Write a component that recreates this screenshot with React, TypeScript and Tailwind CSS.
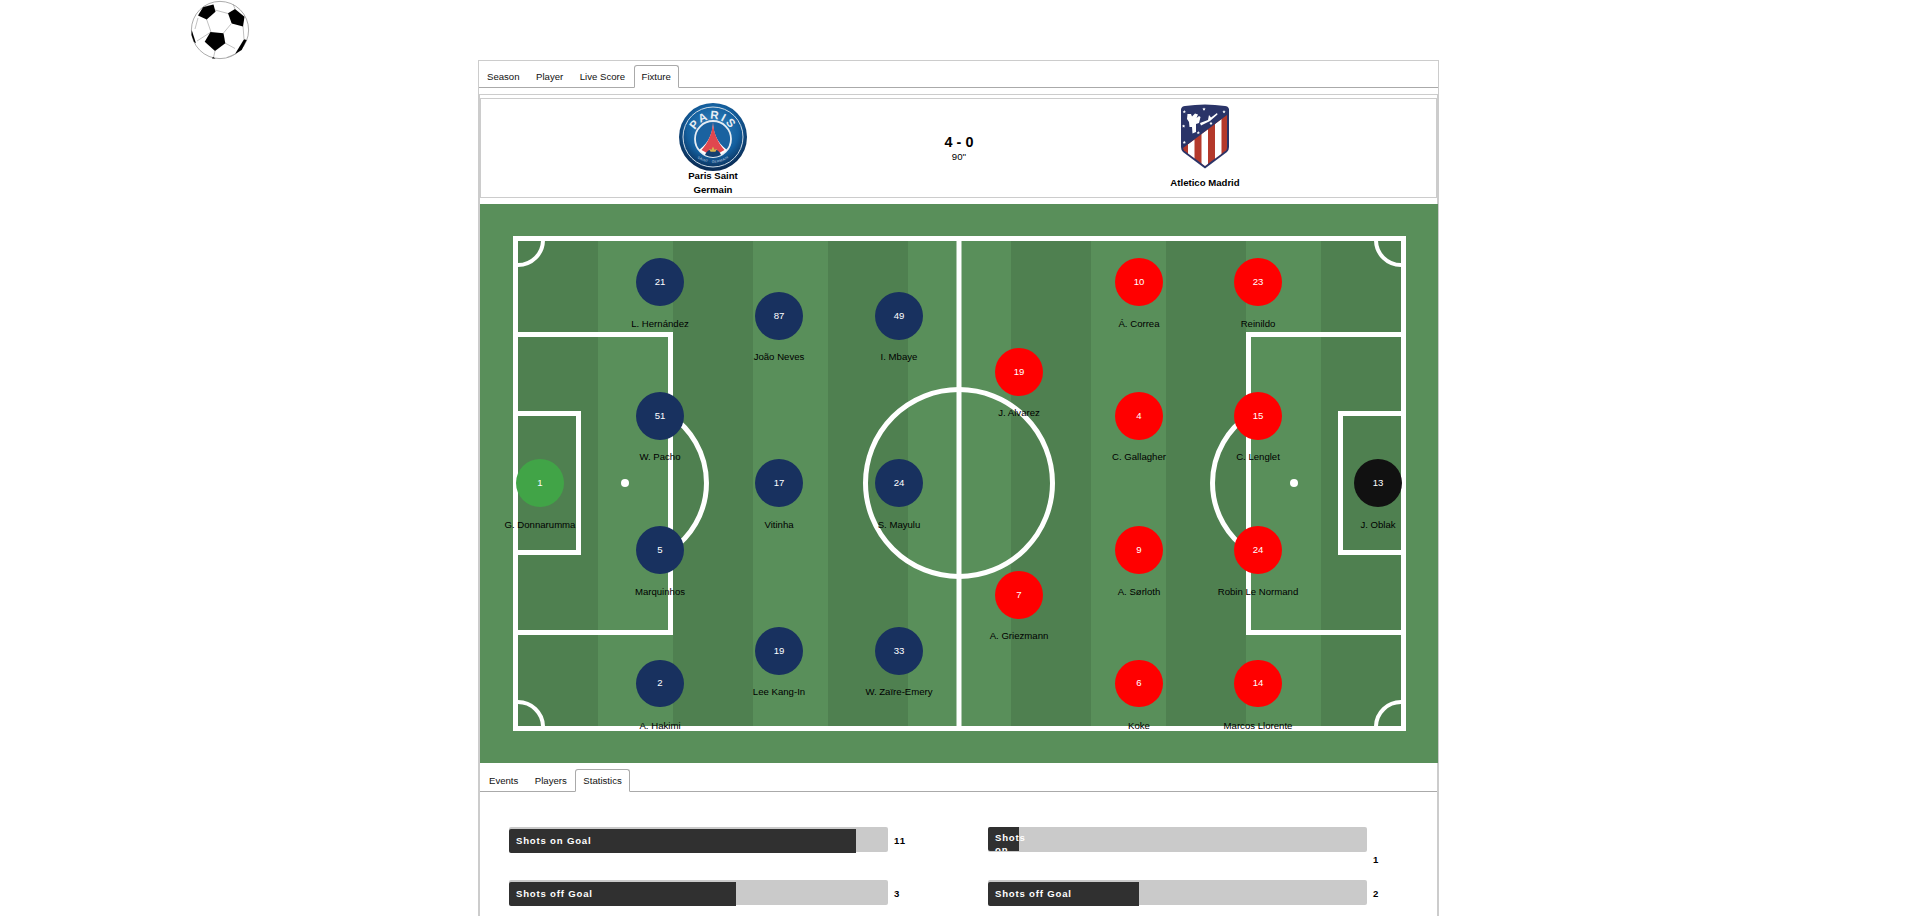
import React from 'react';

type Player = { no: number; name: string; x: number; y: number; flat?: boolean; tight?: boolean };

const home: Player[] = [
  { no: 1, name: 'G. Donnarumma', x: 540, y: 483 },
  { no: 21, name: 'L. Hernández', x: 660, y: 282 },
  { no: 51, name: 'W. Pacho', x: 660, y: 416, tight: true },
  { no: 5, name: 'Marquinhos', x: 660, y: 550 },
  { no: 2, name: 'A. Hakimi', x: 660, y: 684, flat: true },
  { no: 87, name: 'João Neves', x: 779, y: 316, tight: true },
  { no: 17, name: 'Vitinha', x: 779, y: 483 },
  { no: 19, name: 'Lee Kang-In', x: 779, y: 651, tight: true },
  { no: 49, name: 'I. Mbaye', x: 899, y: 316, tight: true },
  { no: 24, name: 'S. Mayulu', x: 899, y: 483 },
  { no: 33, name: 'W. Zaïre-Emery', x: 899, y: 651, tight: true },
];

const away: Player[] = [
  { no: 13, name: 'J. Oblak', x: 1378, y: 483 },
  { no: 23, name: 'Reinildo', x: 1258, y: 282 },
  { no: 15, name: 'C. Lenglet', x: 1258, y: 416, tight: true },
  { no: 24, name: 'Robin Le Normand', x: 1258, y: 550 },
  { no: 14, name: 'Marcos Llorente', x: 1258, y: 684, flat: true },
  { no: 10, name: 'Á. Correa', x: 1139, y: 282 },
  { no: 4, name: 'C. Gallagher', x: 1139, y: 416, tight: true },
  { no: 9, name: 'A. Sørloth', x: 1139, y: 550 },
  { no: 6, name: 'Koke', x: 1139, y: 684, flat: true },
  { no: 19, name: 'J. Alvarez', x: 1019, y: 372, tight: true },
  { no: 7, name: 'A. Griezmann', x: 1019, y: 595, tight: true },
];

const stripes = [
  [518, 80],
  [673, 80],
  [828, 80],
  [1011, 80],
  [1166, 80],
  [1321, 80],
];

function SoccerBall() {
  return (
    <svg viewBox="0 0 100 70" className="absolute left-[170px] top-0 h-[70px] w-[100px]">
      <circle cx="50" cy="30" r="28.6" fill="#fff" stroke="#888" strokeWidth="0.7" />
      <g fill="none" stroke="#999" strokeWidth="0.6">
        <path d="M45 10 L58 13.5 M36.5 19 L41 32 M61 24 L53.5 33 M41 32 L27 41 M55 43 L65 48.5 M45 51 L43.5 57.5 M65 54 L57 57.5 M28 18 L25 29 M73 26 L74 39 M33 7 L43 5 M65 9 L63 4" />
      </g>
      <g fill="#000">
        <path d="M28 15.5 L33 7.3 L43.5 4.5 L45.5 11.7 L36.7 19.6 Z" />
        <path d="M58 13.3 L65 9 L74.5 16.7 L73 26.5 L61.7 23.6 Z" />
        <path d="M40.5 32 L53.5 33.3 L55.3 43.3 L45 51 L34.7 41.7 Z" />
        <path d="M74 39.3 L76.7 40 L71.7 50 L65 54 Z" />
        <path d="M21.7 30 L26 43.3 L24 42 L21.5 35 Z" />
        <path d="M43 57 L45.5 58.5 L42 58.5 Z" />
      </g>
    </svg>
  );
}

function PsgLogo() {
  return (
    <svg viewBox="0 0 68 68" className="h-[68px] w-[68px]">
      <defs>
        <radialGradient id="psgBlue" cx="50%" cy="40%" r="58%">
          <stop offset="0%" stopColor="#3a88c2" />
          <stop offset="65%" stopColor="#14609f" />
          <stop offset="100%" stopColor="#0a2c55" />
        </radialGradient>
        <path id="psgTop" d="M14 36 A20 20 0 0 1 54 36" />
        <path id="psgBottom" d="M7.5 38 A27 27 0 0 0 60.5 38" />
      </defs>
      <circle cx="34" cy="34" r="34" fill="url(#psgBlue)" />
      <circle cx="34" cy="34" r="30" fill="none" stroke="#cfdbe6" strokeWidth="1" />
      <text fontFamily="'Liberation Sans',sans-serif" fontSize="11.5" fontWeight="700" fill="#e8eef4" letterSpacing="2">
        <textPath href="#psgTop" startOffset="50%" textAnchor="middle">
          PARIS
        </textPath>
      </text>
      <text fontFamily="'Liberation Sans',sans-serif" fontSize="3.4" fill="#c9d8e6" letterSpacing="0.3">
        <textPath href="#psgBottom" startOffset="50%" textAnchor="middle">
          SAINT · GERMAIN
        </textPath>
      </text>
      <circle cx="34" cy="36" r="18" fill="#1a62a0" stroke="#e6edf3" strokeWidth="1.8" />
      <path d="M34 18 C34 28 31 39 20 47 Q27 54 34 54 Q41 54 48 47 C37 39 34 28 34 18 Z" fill="#fff" />
      <path d="M34 19.5 C33.5 30 29 40 22.5 47 L27 49.5 L41 49.5 L45.5 47 C39 40 34.5 30 34 19.5 Z" fill="#e0474f" />
      <path d="M26 52 A8.5 8.5 0 0 1 42 52 Q38 54 34 54 Q30 54 26 52 Z" fill="#123f70" />
      <path d="M34 43.5 L35.4 46.5 L38 46 L36.4 48.8 L31.6 48.8 L30 46 L32.6 46.5 Z" fill="#d8b24c" />
    </svg>
  );
}

const crestStars = [
  [3.3, 7.7],
  [23, 5],
  [43, 7.7],
  [2.6, 22],
  [30, 19.3],
  [17.3, 28.7],
  [3.3, 38.3],
];

function AtleticoCrest() {
  return (
    <svg viewBox="0 0 48 65" className="h-[65px] w-[48px]">
      <defs>
        <clipPath id="atmInner">
          <path d="M2 44 L46 11 L46 44 Q46 45 45 46.5 L24 62 L3 46.5 Z" />
        </clipPath>
      </defs>
      <path d="M0 5 Q1 2 4 2 Q24 -1 44 2 Q47 2 48 5 L48 43 Q48 46 46 48 L24 64.5 L2 48 Q0 46 0 43 Z" fill="#2a3468" />
      <g clipPath="url(#atmInner)">
        <rect x="0" y="0" width="48" height="65" fill="#b4392b" />
        <path d="M7 40.25 L13.5 35.4 L13.5 64 L7 64 Z M20.5 30.1 L27 25.25 L27 64 L20.5 64 Z M34 20 L40.5 15.1 L40.5 64 L34 64 Z" fill="#fff" />
      </g>
      <path d="M6.5 10 L10 10 L11 12.5 L14 9.5 L17 10.5 L15.5 14 L18 12 L19.5 13 L18 19 L15 20 L15 28 L11.5 29.5 L11 23 L8.5 23 L8 18 L6 15 Z" fill="#fff" />
      <path d="M19 19 L27 16 L28 11 L30 13.5 L36 9 L36.5 10.5 L29 17 L20 21.5 Z" fill="#fff" />
      {crestStars.map(([sx, sy]) => (
        <polygon
          key={`${sx}-${sy}`}
          points={`${sx},${sy - 1.6} ${sx + 0.5},${sy - 0.5} ${sx + 1.6},${sy - 0.4} ${sx + 0.8},${sy + 0.4} ${sx + 1},${sy + 1.5} ${sx},${sy + 0.9} ${sx - 1},${sy + 1.5} ${sx - 0.8},${sy + 0.4} ${sx - 1.6},${sy - 0.4} ${sx - 0.5},${sy - 0.5}`}
          fill="#fff"
        />
      ))}
    </svg>
  );
}

function PitchMarkings() {
  return (
    <svg viewBox="480 204 958 559" className="absolute inset-0 h-full w-full">
      {stripes.map(([x, w]) => (
        <rect key={x} x={x} y={240} width={w} height={486} fill="#4f8050" />
      ))}
      <g fill="none" stroke="#fff" strokeWidth="5">
        <rect x="515.5" y="238.5" width="888" height="490" />
        <line x1="959" y1="238" x2="959" y2="729" />
        <circle cx="959" cy="483" r="93.5" />
        <rect x="515.5" y="334.5" width="155" height="298" />
        <rect x="1248.5" y="334.5" width="155" height="298" />
        <rect x="515.5" y="413.5" width="63" height="139" />
        <rect x="1340.5" y="413.5" width="63" height="139" />
        <path d="M670.5 415.4 A81.5 81.5 0 0 1 670.5 550.6" />
        <path d="M1248.5 415.4 A81.5 81.5 0 0 0 1248.5 550.6" />
      </g>
      <g fill="none" stroke="#fff" strokeWidth="4">
        <path d="M518 265 A25 25 0 0 0 543 240.5" />
        <path d="M1401 265 A25 25 0 0 1 1376 240.5" />
        <path d="M518 702 A25 25 0 0 1 543 726" />
        <path d="M1401 702 A25 25 0 0 0 1376 726" />
      </g>
      <circle cx="625" cy="483" r="4" fill="#fff" />
      <circle cx="1294" cy="483" r="4" fill="#fff" />
    </svg>
  );
}

function PlayerPin({ player, color }: { player: Player; color: string }) {
  const gap = player.flat ? 'mt-[13px]' : player.tight ? 'mt-[11px]' : 'mt-3';
  return (
    <div
      className="absolute flex w-[120px] -translate-x-1/2 flex-col items-center"
      style={{ left: player.x - 480, top: player.y - 228 }}
    >
      <div className={`flex w-12 items-center justify-center rounded-full text-white ${player.flat ? 'h-[47px]' : 'h-12'} ${color}`}>
        {player.no}
      </div>
      <div className={`whitespace-nowrap leading-3 text-black ${gap}`}>{player.name}</div>
    </div>
  );
}

function Tab({ label, active }: { label: string; active?: boolean }) {
  return (
    <div
      className={`-mb-px mr-[0.5px] rounded-t-[3px] border px-[7px] leading-[21px] ${
        active ? 'border-[#aaa] border-b-white bg-white' : 'border-transparent'
      }`}
    >
      {label}
    </div>
  );
}

function StatBar({
  label,
  value,
  pct,
  wrapped,
}: {
  label: string;
  value: number;
  pct: number;
  wrapped?: boolean;
}) {
  return (
    <div className="flex h-[25px]">
      <div className="relative h-[25px] w-[379px] shrink-0 rounded-[2px] bg-[#cacaca]">
        <div
          className={`absolute left-0 h-6 rounded-l-[2px] bg-[#303030] pl-[7px] font-bold tracking-[0.8px] text-white ${
            wrapped ? 'top-0 pt-[5px] leading-3 [clip-path:inset(0_-20px_0_0)]' : 'top-[2px] overflow-hidden leading-6'
          }`}
          style={{ width: pct }}
        >
          {label}
        </div>
      </div>
      <div className={`pl-[6px] font-bold tracking-[1px] text-black ${wrapped ? 'mt-[26px] leading-[13px]' : 'leading-[27px]'}`}>
        {value}
      </div>
    </div>
  );
}

export default function App() {
  return (
    <div className="relative h-screen overflow-hidden bg-white pt-[60px] font-['Liberation_Sans',Arial,sans-serif] text-[9.6px] text-[#111]">
      <SoccerBall />
      <div className="ml-[478px] h-[900px] w-[961px] border border-[#ccc]">
        <div className="flex h-[27px] items-end border-b border-[#aaa]">
          <Tab label="Season" />
          <Tab label="Player" />
          <Tab label="Live Score" />
          <Tab label="Fixture" active />
        </div>
        <div className="mt-[6px] h-[900px] border-x border-t border-[#ccc]">
          <div className="mt-[3px] h-[100px] border border-[#ccc] pl-px">
            <div className="mx-auto grid w-[738px] grid-cols-3 pt-1">
              <div className="flex flex-col items-center">
                <div className="h-[66px]">
                  <PsgLogo />
                </div>
                <div className="flex h-7 w-[72px] items-center justify-center text-center font-bold leading-[14px] text-black">
                  Paris Saint Germain
                </div>
              </div>
              <div className="flex flex-col items-center pt-[31px] text-black">
                <div className="text-[14.4px] font-bold leading-4">4 - 0</div>
                <div className="leading-[14px]">90''</div>
              </div>
              <div className="flex flex-col items-center">
                <div className="h-[66px] pt-px">
                  <AtleticoCrest />
                </div>
                <div className="flex h-7 items-center justify-center font-bold leading-[14px] text-black">Atletico Madrid</div>
              </div>
            </div>
          </div>
          <div className="relative mt-[6px] h-[559px] w-[958px] bg-[#598f5a]">
            <PitchMarkings />
            {home.map((p) => (
              <PlayerPin key={p.name} player={p} color={p.no === 1 ? 'bg-[#41a447]' : 'bg-[#18315f]'} />
            ))}
            {away.map((p) => (
              <PlayerPin key={p.name} player={p} color={p.no === 13 ? 'bg-[#111111]' : 'bg-[#ff0000]'} />
            ))}
          </div>
          <div className="flex h-[29px] items-end border-b border-[#aaa] pl-px">
            <Tab label="Events" />
            <Tab label="Players" />
            <Tab label="Statistics" active />
          </div>
          <div className="grid grid-cols-[479px_420px] gap-y-[28px] pl-[29px] pt-[35px]">
            <StatBar label="Shots on Goal" value={11} pct={347} />
            <StatBar label="Shots on Goal" value={1} pct={31} wrapped />
            <StatBar label="Shots off Goal" value={3} pct={227} />
            <StatBar label="Shots off Goal" value={2} pct={151} />
          </div>
        </div>
      </div>
    </div>
  );
}
